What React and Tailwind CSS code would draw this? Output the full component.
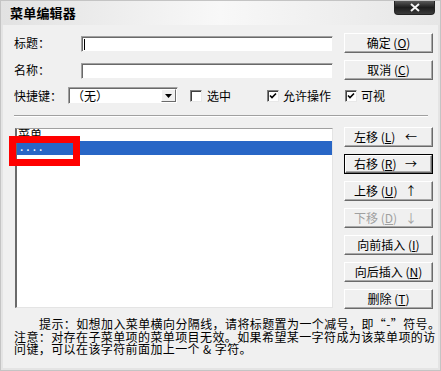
import React from "react";

const font = { fontFamily: '"Noto Sans CJK SC", "Noto Sans", sans-serif' };

function Btn({ children, className = "", def = false, disabled = false }) {
  return (
    <div className={`w-[89px] h-[20px] ${def ? "border border-black" : ""}`}>
      <div
        className={`w-full h-full bg-[#f0f0f0] border border-t-white border-l-white border-r-[#6a6a6a] border-b-[#6a6a6a] shadow-[inset_-1px_-1px_0_#a8a8a8] flex items-center text-[12px] leading-none ${disabled ? "text-[#a0a0a0]" : "text-black"} ${className}`}
      >
        {children}
      </div>
    </div>
  );
}

function Sunken({ className = "", children }) {
  return (
    <div className={`bg-white border border-t-[#a0a0a0] border-l-[#a0a0a0] border-b-[#f0f0f0] border-r-[#f0f0f0] shadow-[inset_1px_1px_0_#696969] ${className}`}>
      {children}
    </div>
  );
}

function Check({ checked }) {
  return (
    <div className="w-[12px] h-[12px] bg-white border border-t-[#808080] border-l-[#808080] border-b-[#e8e8e8] border-r-[#e8e8e8] shadow-[inset_1px_1px_0_#404040] flex items-center justify-center">
      {checked && (
        <svg width="8" height="8" viewBox="0 0 8 8">
          <path d="M1 3.5 L3 5.5 L7 1.5" stroke="#000" strokeWidth="1.6" fill="none" />
        </svg>
      )}
    </div>
  );
}

function U({ children }) {
  return <span className="underline underline-offset-1">{children}</span>;
}

export default function App() {
  return (
    <div style={font} className="w-[441px] h-[371px] flex flex-col bg-[#f0f0f0] border border-[#c4c4c4] overflow-hidden">
      {/* Title bar */}
      <div className="h-[24px] shrink-0 flex items-start bg-gradient-to-r from-[#e2e2e2] via-[#f8f8f8] to-[#e6e6e6] relative">
        <div className="pl-[9px] pt-[4px] text-[13px] font-bold leading-[16px] text-black tracking-[0.2px]">菜单编辑器</div>
        <div className="ml-auto mr-[5px] w-[41px] h-[14px] rounded-b-[4px] bg-gradient-to-b from-[#5a5a5a] via-[#1e1e1e] to-[#3a3a3a] border border-t-0 border-[#222] flex items-center justify-center">
          <svg width="12" height="9" viewBox="0 0 12 9">
            <path d="M2 1 L10 8 M10 1 L2 8" stroke="#f4f4f4" strokeWidth="2" />
          </svg>
        </div>
      </div>

      {/* Body */}
      <div className="flex-1 flex flex-col border-x-[2px] border-b-[2px] border-[#e4e4e4] pl-[11px] pr-[3px] pt-[8px] text-[12px] text-black">
        {/* Row 1 */}
        <div className="flex items-center h-[20px]">
          <div className="w-[67px] leading-none">标题：</div>
          <Sunken className="w-[252px] h-[16px] mt-[2px] flex items-center pl-[2px]">
            <div className="w-px h-[11px] bg-black" />
          </Sunken>
          <div className="ml-[11px]">
            <Btn className="justify-center">确定 (<U>O</U>)</Btn>
          </div>
        </div>
        {/* Row 2 */}
        <div className="flex items-center h-[20px] mt-[7px]">
          <div className="w-[67px] leading-none">名称：</div>
          <Sunken className="w-[252px] h-[16px] mt-[2px]" />
          <div className="ml-[11px]">
            <Btn className="justify-center">取消 (<U>C</U>)</Btn>
          </div>
        </div>
        {/* Row 3 */}
        <div className="flex items-center h-[17px] mt-[7px]">
          <div className="w-[54px] leading-none">快捷键：</div>
          <Sunken className="w-[110px] h-[17px] flex items-center">
            <div className="flex-1 pl-[3px] leading-none">（无）</div>
            <div className="w-[15px] h-[13px] mr-[1px] bg-[#f0f0f0] border border-t-white border-l-white border-r-[#6a6a6a] border-b-[#6a6a6a] flex items-center justify-center">
              <svg width="7" height="4" viewBox="0 0 7 4">
                <path d="M0 0 H7 L3.5 4 Z" fill="#000" />
              </svg>
            </div>
          </Sunken>
          <div className="ml-[12px] flex items-center">
            <Check />
            <span className="ml-[5px] leading-none">选中</span>
          </div>
          <div className="ml-[36px] flex items-center">
            <Check checked />
            <span className="ml-[4px] leading-none">允许操作</span>
          </div>
          <div className="ml-[14px] flex items-center">
            <Check checked />
            <span className="ml-[4px] leading-none">可视</span>
          </div>
        </div>

        {/* Separator */}
        <div className="mt-[11px] w-[414px] border-t border-t-[#a0a0a0] border-b border-b-white" />

        {/* List + buttons */}
        <div className="flex mt-[11px]">
          <div className="relative ml-[1px] w-[318px] h-[180px] bg-white border border-t-[#a0a0a0] border-l-[#6a6a6a] border-l-[2px] border-b-[#e4e4e4] border-r-[#e4e4e4] overflow-hidden">
            <div className="h-[14px] -mt-[2px] pl-[1px] leading-[14px] text-[12px]">菜单</div>
            <div className="h-[14px] bg-[#2866c6] text-white pl-[3px] leading-[10px] tracking-[3px]">....</div>
          </div>
          <div className="ml-[11px] -mt-[1px] flex flex-col gap-[7px]">
            <Btn className="justify-between pl-[9px] pr-[15px]">
              <span>左移 (<U>L</U>)</span><span>←</span>
            </Btn>
            <Btn def className="justify-between pl-[8px] pr-[14px]">
              <span>右移 (<U>R</U>)</span><span>→</span>
            </Btn>
            <Btn className="justify-between pl-[9px] pr-[15px]">
              <span>上移 (<U>U</U>)</span><span>↑</span>
            </Btn>
            <Btn disabled className="justify-between pl-[9px] pr-[15px]">
              <span>下移 (<U>D</U>)</span><span>↓</span>
            </Btn>
            <Btn className="justify-center">向前插入 (<U>I</U>)</Btn>
            <Btn className="justify-center">向后插入 (<U>N</U>)</Btn>
            <Btn className="justify-center">删除 (<U>T</U>)</Btn>
          </div>
        </div>

        {/* Hint */}
        <div className="mt-[9px] text-[12px] leading-[12.5px] tracking-[0.4px] whitespace-nowrap">
          <div className="pl-[25px]">提示：如想加入菜单横向分隔线，请将标题置为一个减号，即“-”符号。</div>
          <div>注意：对存在子菜单项的菜单项目无效。如果希望某一字符成为该菜单项的访</div>
          <div>问键，可以在该字符前面加上一个 &amp; 字符。</div>
        </div>
      </div>

      {/* Red annotation box */}
      <div className="absolute left-[9px] top-[136px] w-[71px] h-[30px] border-[7px] border-[#ff0000]" />
    </div>
  );
}
